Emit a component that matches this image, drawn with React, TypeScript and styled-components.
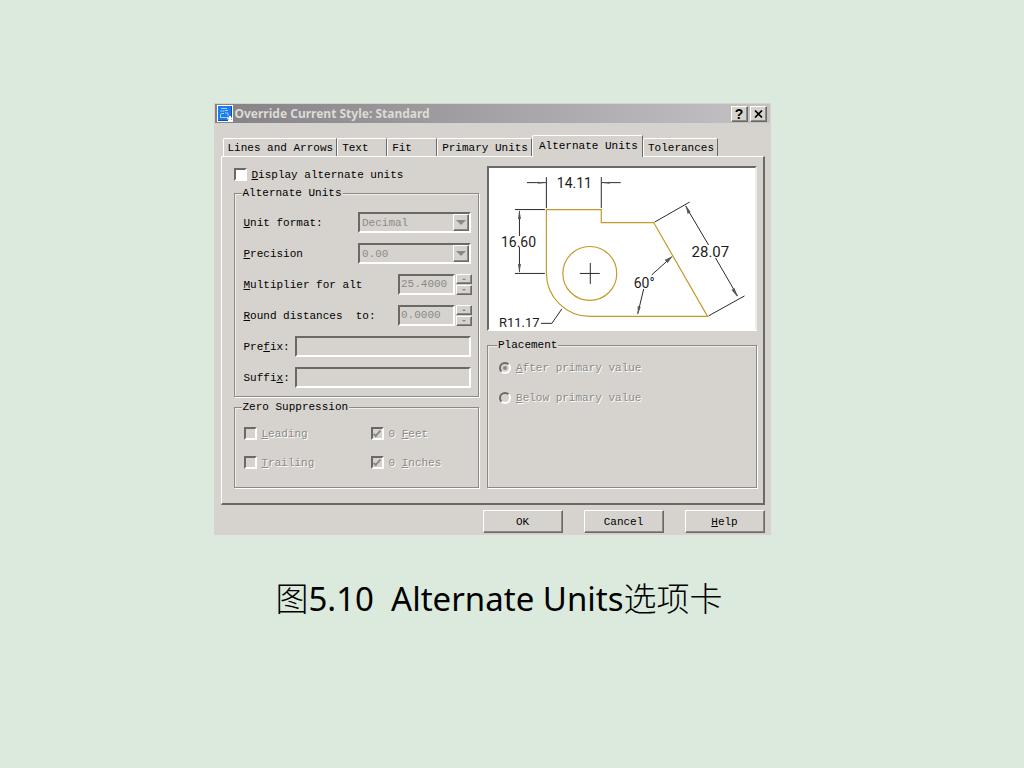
import React from "react";
import styled, { createGlobalStyle, css } from "styled-components";

const face = "#d6d3ce";
const shade = "#8c8a87";
const dark = "#6b6966";
const light = "#ffffff";

const GlobalStyle = createGlobalStyle`
  *, *::before, *::after { box-sizing: border-box; }
  body { margin: 0; background: #dbeadd; }
  button, input, select { font: inherit; color: inherit; margin: 0; border-radius: 0; }
`;

const raised = css`
  border: 1px solid;
  border-color: ${light} ${dark} ${dark} ${light};
  box-shadow: inset -1px -1px 0 ${shade};
`;

const sunken = css`
  border: 2px solid;
  border-color: ${dark} ${light} ${light} ${dark};
`;

const Page = styled.main`
  min-height: 100vh;
  display: flex;
  flex-direction: column;
  align-items: center;
  gap: 38px;
  padding: 103px 40px 40px 0;
  background: #dbeadd;
`;

const Dialog = styled.section`
  width: 100%;
  max-width: 557px;
  padding: 1px 1px 2px;
  background: ${face};
  color: #000;
  font: 11px/14px "Liberation Mono", monospace;
`;

const TitleBar = styled.header`
  display: flex;
  align-items: center;
  gap: 2px;
  height: 19px;
  padding: 0 3px 0 2px;
  background: linear-gradient(to right, #848284, #c4c2c4);
`;

const Title = styled.h1`
  flex: 1;
  margin: 0;
  color: #dedbd6;
  font: bold 12px/18px "Noto Sans", sans-serif;
  white-space: nowrap;
`;

const TitleButton = styled.button`
  ${raised}
  display: grid;
  place-items: center;
  width: 17px;
  height: 16px;
  padding: 0;
  background: ${face};
  font: bold 14px/14px "Liberation Sans", sans-serif;
`;

const Body = styled.div`
  padding: 12px 5px 0 6px;
`;

const Tabs = styled.div`
  display: flex;
  align-items: flex-end;
  padding-left: 2px;
`;

const Tab = styled.button<{ $active?: boolean }>`
  height: ${(p) => (p.$active ? 22 : 18)}px;
  min-width: 50px;
  padding: ${(p) => (p.$active ? "0 4px 2px 6px" : "0 3px 0 4px")};
  margin-bottom: ${(p) => (p.$active ? -1 : 0)}px;
  border: 1px solid;
  border-width: 1px 1px 0 1px;
  border-color: ${light} ${dark} ${dark} ${light};
  border-top-left-radius: 2px;
  background: ${face};
  text-align: left;
  white-space: nowrap;
  z-index: ${(p) => (p.$active ? 1 : 0)};
`;

const Panel = styled.div`
  display: grid;
  grid-template-columns: minmax(0, 246fr) minmax(0, 270fr);
  gap: 8px;
  padding: 9px 6px 15px 12px;
  border: solid;
  border-width: 1px 2px 2px 1px;
  border-color: ${light} ${dark} ${dark} ${light};
`;

const Column = styled.div<{ $gap: number }>`
  display: flex;
  flex-direction: column;
  gap: ${(p) => p.$gap}px;
`;

const Group = styled.fieldset<{ $pad: string; $grow?: boolean }>`
  min-width: 0;
  margin: 0;
  padding: ${(p) => p.$pad};
  flex: ${(p) => (p.$grow ? 1 : "none")};
  border: 1px solid ${shade};
  box-shadow: 1px 1px 0 ${light}, inset 1px 1px 0 #efedea;
`;

const Legend = styled.legend`
  padding: 0 1px;
  margin-left: -2px;
  background: ${face};
  color: #000;
`;

const Rows = styled.div<{ $gap: number }>`
  display: flex;
  flex-direction: column;
  gap: ${(p) => p.$gap}px;
`;

const Row = styled.div`
  display: flex;
  align-items: center;
  height: 21px;
`;

const Label = styled.label<{ $short?: boolean }>`
  flex: ${(p) => (p.$short ? "0 0 51px" : "1")};
  white-space: pre;
`;

const SelectFrame = styled.span`
  position: relative;
  width: 113px;
  height: 21px;
`;

const Select = styled.select`
  ${sunken}
  display: block;
  appearance: none;
  width: 100%;
  height: 21px;
  padding: 0 18px 0 2px;
  background: ${face};
  &:disabled { color: ${shade}; opacity: 1; }
`;

const SelectArrow = styled.span`
  ${raised}
  position: absolute;
  top: 2px;
  right: 2px;
  display: grid;
  place-items: center;
  width: 16px;
  height: 17px;
  background: ${face};
  pointer-events: none;
`;

const TextField = styled.input<{ $number?: boolean }>`
  ${sunken}
  width: ${(p) => (p.$number ? "57px" : "auto")};
  flex: ${(p) => (p.$number ? "none" : "1")};
  min-width: 0;
  height: 21px;
  padding: 0 0 2px 1px;
  background: ${face};
  &:disabled { color: ${shade}; opacity: 1; }
`;

const Spinner = styled.span`
  display: flex;
  flex-direction: column;
  gap: 1px;
  margin: 0 -1px 0 1px;
`;

const SpinButton = styled.button`
  ${raised}
  display: grid;
  place-items: center;
  width: 16px;
  height: 10px;
  padding: 0;
  background: ${face};
`;

const Choice = styled.label<{ $disabled?: boolean }>`
  display: flex;
  align-items: center;
  gap: 5px;
  height: 13px;
  white-space: pre;
  ${(p) => p.$disabled && css`color: ${shade}; text-shadow: 1px 1px 0 ${light};`}
`;

const MainChoice = styled(Choice)`
  height: 17px;
`;

const check = css`
  &:checked::after {
    content: "";
    width: 4px;
    height: 8px;
    margin-top: -2px;
    border: solid ${shade};
    border-width: 0 2px 2px 0;
    transform: rotate(42deg);
  }
`;

const CheckBox = styled.input`
  ${sunken}
  ${check}
  appearance: none;
  display: grid;
  place-items: center;
  width: 13px;
  height: 13px;
  background: ${light};
  &:disabled { background: ${face}; }
`;

const Radio = styled.input`
  ${sunken}
  appearance: none;
  display: grid;
  place-items: center;
  width: 12px;
  height: 12px;
  && { border-radius: 50%; }
  background: ${face};
  &:checked::after {
    content: "";
    width: 4px;
    height: 4px;
    border-radius: 50%;
    background: ${shade};
  }
`;

const ChoiceGrid = styled.div`
  display: grid;
  grid-template-columns: 127px 1fr;
  row-gap: 16px;
`;

const Preview = styled.div`
  ${sunken}
  border-right-color: #efedea;
  height: 165px;
  background: ${light};
  svg { display: block; width: 100%; height: 100%; overflow: visible; }
`;

const Actions = styled.footer`
  display: flex;
  justify-content: flex-end;
  gap: 21px;
  padding-top: 5px;
`;

const ActionButton = styled.button`
  ${raised}
  width: 80px;
  height: 23px;
  padding: 0;
  background: ${face};
`;

const Caption = styled.p`
  margin: 0;
  padding-left: 14px;
  color: #000;
  font: 33px/48px "Noto Sans", "Noto Sans CJK SC", sans-serif;
  white-space: pre;
`;

const Han = styled.span`
  font-family: "Noto Sans CJK SC", sans-serif;
  font-weight: 300;
`;

const AppIcon = () => (
  <svg width="16" height="17" viewBox="0 0 16 17" aria-hidden="true">
    <rect width="16" height="17" fill="#fff" />
    <rect x="1" y="1" width="13" height="14" fill="#1a7cf0" />
    <path d="M4 3.5h6M3.5 6h4M8 5.5h3M4 8.500h3M8 8h3v3M3 12.500h8M3.500 9v3" stroke="#a8d0fb" fill="none" />
    <path d="M14.500 1v14M1 15.500h10" stroke="#0b50b8" fill="none" />
    <path d="M13 11v5M10.500 13.500h5" stroke="#fff" strokeWidth="2" />
  </svg>
);

const Triangle = ({ size, up }: { size: number; up?: boolean }) => (
  <svg width={size * 2} height={size} viewBox="0 0 8 4" aria-hidden="true">
    <path d={up ? "M0 4h8L4 0z" : "M0 0h8L4 4z"} fill={shade} />
  </svg>
);

const Drawing = () => (
  <svg viewBox="0 0 266 161" role="img" aria-label="Dimension preview">
    <g fill="none" stroke="#c49a2c" strokeWidth="1.200">
      <path d="M57.500 41.500H112.500V54.500H165L219 148.500H101A43.500 43.500 0 0 1 57.500 105z" />
      <circle cx="101" cy="105.500" r="27" />
    </g>
    <g fill="none" stroke="#2a2a2a">
      <path d="M57.500 9V40M112.500 9V40M38 14.500H57M113 14.500H132" />
      <path d="M26 41.500H56M26 105.500H56M30.500 43V68M30.500 79V104" />
      <path d="M101.500 95V116M91 105.500H111" />
      <path d="M166 54L201 34M220 148L256 128M197 38L220 77M227 90L249 128" />
      <path d="M155 121L149 146M163 107L183 89M52 155.500H63L73 141" />
    </g>
    <g fill="#555">
      <path d="M57 14.500l-8 -1v2zM113 14.500l8 -1v2z" />
      <path d="M30.500 42l-1.500 9h3zM30.500 105l-1.500 -9h3z" />
      <path d="M197 37l2 9 3 -2zM249 129l-6 -7 3 -2z" />
      <path d="M149 147l0 -9 3 1zM184 88l-8 4 3 3z" />
    </g>
    <g fill="#1c1c1c" fontFamily="Roboto, sans-serif" fontSize="14">
      <text x="68" y="20">14.11</text>
      <text x="12" y="79">16.60</text>
      <text x="203" y="89" fontSize="15">28.07</text>
      <text x="145" y="120">60°</text>
      <text x="10" y="159" fontSize="13">R11.17</text>
    </g>
  </svg>
);

const tabs = ["Lines and Arrows", "Text", "Fit", "Primary Units", "Alternate Units", "Tolerances"];

const SelectRow = ({ id, label, value }: { id: string; label: React.ReactNode; value: string }) => (
  <Row>
    <Label htmlFor={id}>{label}</Label>
    <SelectFrame>
      <Select id={id} disabled defaultValue={value}>
        <option>{value}</option>
      </Select>
      <SelectArrow><Triangle size={5} /></SelectArrow>
    </SelectFrame>
  </Row>
);

const SpinRow = ({ id, label, value }: { id: string; label: React.ReactNode; value: string }) => (
  <Row>
    <Label htmlFor={id}>{label}</Label>
    <TextField id={id} $number disabled defaultValue={value} />
    <Spinner>
      <SpinButton disabled aria-label="Increase"><Triangle size={2} up /></SpinButton>
      <SpinButton disabled aria-label="Decrease"><Triangle size={2} /></SpinButton>
    </Spinner>
  </Row>
);

const TextRow = ({ id, label }: { id: string; label: React.ReactNode }) => (
  <Row>
    <Label htmlFor={id} $short>{label}</Label>
    <TextField id={id} disabled />
  </Row>
);

export default function App() {
  return (
    <>
      <GlobalStyle />
      <Page>
        <Dialog>
          <TitleBar>
            <AppIcon />
            <Title>Override Current Style: Standard</Title>
            <TitleButton aria-label="Help">?</TitleButton>
            <TitleButton aria-label="Close">
              <svg width="9" height="8" viewBox="0 0 9 8" aria-hidden="true">
                <path d="M1 0.500L8 7.500M8 0.500L1 7.500" stroke="#000" strokeWidth="1.700" />
              </svg>
            </TitleButton>
          </TitleBar>
          <Body>
            <Tabs role="tablist">
              {tabs.map((name) => (
                <Tab key={name} role="tab" $active={name === "Alternate Units"} aria-selected={name === "Alternate Units"}>
                  {name}
                </Tab>
              ))}
            </Tabs>
            <Panel role="tabpanel">
              <Column $gap={3}>
                <MainChoice>
                  <CheckBox type="checkbox" />
                  <span><u>D</u>isplay alternate units</span>
                </MainChoice>
                <Group $pad="12px 7px 8px 9px">
                  <Legend>Alternate Units</Legend>
                  <Rows $gap={10}>
                    <SelectRow id="format" label={<><u>U</u>nit format:</>} value="Decimal" />
                    <SelectRow id="precision" label={<><u>P</u>recision</>} value="0.00" />
                    <SpinRow id="multiplier" label={<><u>M</u>ultiplier for alt</>} value="25.4000" />
                    <SpinRow id="round" label={<><u>R</u>ound distances  to:</>} value="0.0000" />
                    <TextRow id="prefix" label={<>Pre<u>f</u>ix:</>} />
                    <TextRow id="suffix" label={<>Suffi<u>x</u>:</>} />
                  </Rows>
                </Group>
                <Group $pad="13px 8px 18px 9px" $grow>
                  <Legend>Zero Suppression</Legend>
                  <ChoiceGrid>
                    <Choice $disabled><CheckBox type="checkbox" disabled /><span><u>L</u>eading</span></Choice>
                    <Choice $disabled><CheckBox type="checkbox" disabled defaultChecked /><span>0 <u>F</u>eet</span></Choice>
                    <Choice $disabled><CheckBox type="checkbox" disabled /><span><u>T</u>railing</span></Choice>
                    <Choice $disabled><CheckBox type="checkbox" disabled defaultChecked /><span>0 <u>I</u>nches</span></Choice>
                  </ChoiceGrid>
                </Group>
              </Column>
              <Column $gap={7}>
                <Preview><Drawing /></Preview>
                <Group $pad="9px 8px 8px 11px" $grow>
                  <Legend>Placement</Legend>
                  <Rows $gap={17}>
                    <Choice $disabled><Radio type="radio" name="placement" disabled defaultChecked /><span><u>A</u>fter primary value</span></Choice>
                    <Choice $disabled><Radio type="radio" name="placement" disabled /><span><u>B</u>elow primary value</span></Choice>
                  </Rows>
                </Group>
              </Column>
            </Panel>
            <Actions>
              <ActionButton>OK</ActionButton>
              <ActionButton>Cancel</ActionButton>
              <ActionButton><u>H</u>elp</ActionButton>
            </Actions>
          </Body>
        </Dialog>
        <Caption><Han>图</Han>5.10  Alternate Units<Han>选项卡</Han></Caption>
      </Page>
    </>
  );
}
